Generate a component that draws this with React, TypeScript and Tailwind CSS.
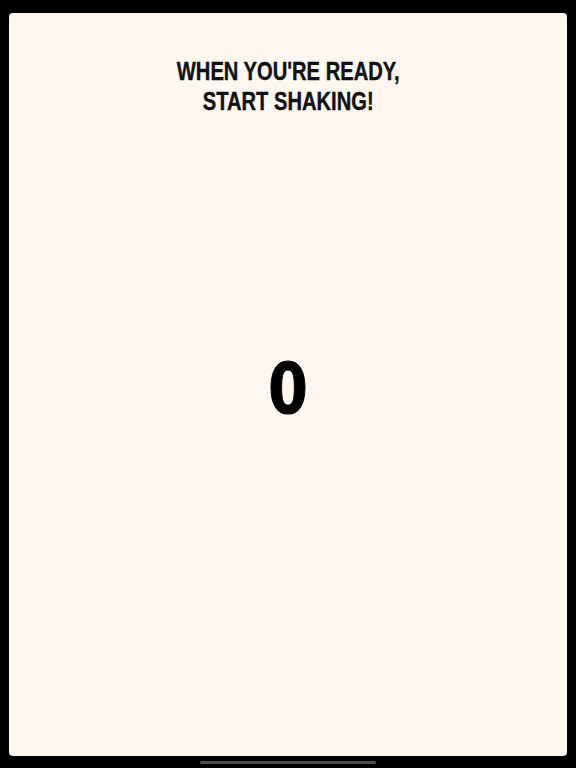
const App = () => {
  return (
    <div className="h-[768px] w-[576px] bg-black px-[9px] pt-[13px] overflow-hidden">
      <div className="h-[743px] rounded-[4px] bg-[#fef6f0] flex flex-col items-center pt-[43px]">
        <h1 className="scale-x-[0.806] text-center font-['Liberation_Sans',sans-serif] text-[25px] leading-[30px] font-bold text-[#111] uppercase [-webkit-text-stroke:0.4px_#111]">
          WHEN YOU'RE READY,
          <br />
          START SHAKING!
        </h1>
        <div className="mt-[238px] scale-x-[0.9] font-['DejaVu_Sans_Condensed',sans-serif] text-[70px] leading-[70px] font-bold text-black [-webkit-text-stroke:1px_black]">
          0
        </div>
      </div>
      <div className="mx-auto mt-[5px] h-[3px] w-[176px] rounded-full bg-[#4d4d4d]" />
    </div>
  );
};

export default App;
